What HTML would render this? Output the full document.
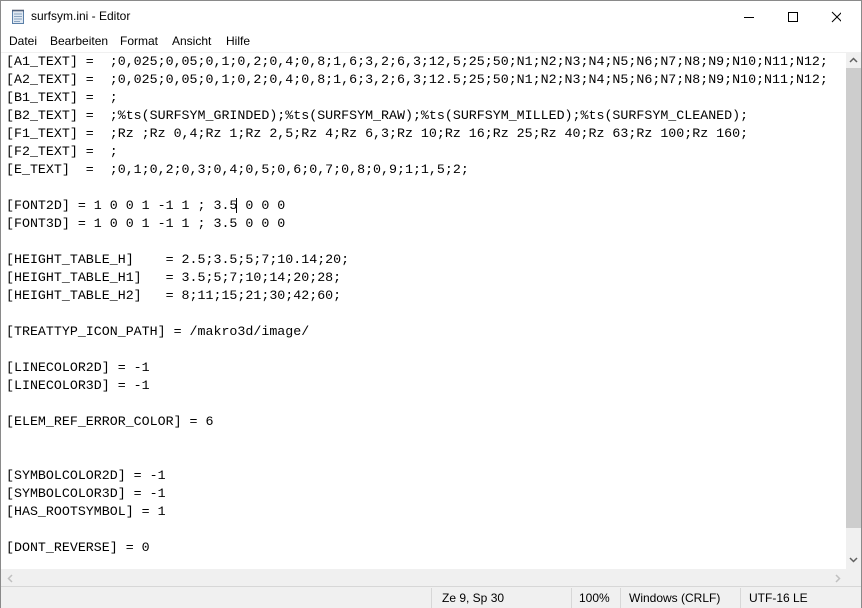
<!DOCTYPE html>
<html><head><meta charset="utf-8"><style>
*{margin:0;padding:0;box-sizing:border-box}
body{width:862px;height:608px;background:#fff;position:relative;overflow:hidden;font-family:"Liberation Sans",sans-serif}
.win{position:absolute;left:0;top:0;width:862px;height:608px;border:1px solid #8a8a8a}
.title{position:absolute;left:0;top:0;width:860px;height:31px;background:#fff}
.title .t{position:absolute;left:30px;top:8px;font-size:12px;color:#000}
.menu{position:absolute;left:0;top:31px;width:860px;height:19px;font-size:12px}
.menu span{position:absolute;top:2px}
.ed{position:absolute;left:0;top:51px;width:845px;height:517px;border-top:1px solid #f0f0f0;overflow:hidden}
pre{position:absolute;left:5px;top:0px;font-family:"Liberation Mono",monospace;font-size:13.3px;line-height:18px;color:#000;white-space:pre}
.vs{position:absolute;left:845px;top:51px;width:15px;height:517px;background:#f0f0f0}
.thumb{position:absolute;left:0;top:16px;width:15px;height:460px;background:#cdcdcd}
.hs{position:absolute;left:0;top:568px;width:860px;height:17px;background:#f0f0f0}
.st{position:absolute;left:0;top:585px;width:860px;height:22px;background:#f0f0f0;border-top:1px solid #d7d7d7;font-size:12px}
.st span{position:absolute;top:4px}
.sep{position:absolute;top:1px;width:1px;height:20px;background:#d7d7d7}
</style></head><body>
<div class="win">
<div class="title">
<svg style="position:absolute;left:9px;top:7px" width="16" height="17" viewBox="0 0 16 17"><rect x="2.5" y="2.5" width="11" height="13" fill="#dfe8f2" stroke="#5a7fa8"/><path d="M4 6h8M4 8.5h8M4 11h8M4 13.5h6" stroke="#8aa4c0"/><path d="M3 1.5v2M5 1.5v2M7 1.5v2M9 1.5v2M11 1.5v2M13 1.5v2" stroke="#445"/></svg>
<span class="t">surfsym.ini - Editor</span>
<svg style="position:absolute;left:740px;top:9px" width="100" height="14"><path d="M3 7.5h10" stroke="#000"/><rect x="47.5" y="2.5" width="9" height="9" fill="none" stroke="#000"/><path d="M91 2l10 10M101 2l-10 10" stroke="#000"/></svg>
</div>
<div class="menu"><span style="left:8px">Datei</span><span style="left:49px">Bearbeiten</span><span style="left:119px">Format</span><span style="left:171px">Ansicht</span><span style="left:225px">Hilfe</span></div>
<div class="ed"><pre>[A1_TEXT] =  ;0,025;0,05;0,1;0,2;0,4;0,8;1,6;3,2;6,3;12,5;25;50;N1;N2;N3;N4;N5;N6;N7;N8;N9;N10;N11;N12;
[A2_TEXT] =  ;0,025;0,05;0,1;0,2;0,4;0,8;1,6;3,2;6,3;12.5;25;50;N1;N2;N3;N4;N5;N6;N7;N8;N9;N10;N11;N12;
[B1_TEXT] =  ;
[B2_TEXT] =  ;%ts(SURFSYM_GRINDED);%ts(SURFSYM_RAW);%ts(SURFSYM_MILLED);%ts(SURFSYM_CLEANED);
[F1_TEXT] =  ;Rz ;Rz 0,4;Rz 1;Rz 2,5;Rz 4;Rz 6,3;Rz 10;Rz 16;Rz 25;Rz 40;Rz 63;Rz 100;Rz 160;
[F2_TEXT] =  ;
[E_TEXT]  =  ;0,1;0,2;0,3;0,4;0,5;0,6;0,7;0,8;0,9;1;1,5;2;

[FONT2D] = 1 0 0 1 -1 1 ; 3.5<span style="border-left:1px solid #000;margin-left:-1px"></span> 0 0 0
[FONT3D] = 1 0 0 1 -1 1 ; 3.5 0 0 0

[HEIGHT_TABLE_H]    = 2.5;3.5;5;7;10.14;20;
[HEIGHT_TABLE_H1]   = 3.5;5;7;10;14;20;28;
[HEIGHT_TABLE_H2]   = 8;11;15;21;30;42;60;

[TREATTYP_ICON_PATH] = /makro3d/image/

[LINECOLOR2D] = -1
[LINECOLOR3D] = -1

[ELEM_REF_ERROR_COLOR] = 6


[SYMBOLCOLOR2D] = -1
[SYMBOLCOLOR3D] = -1
[HAS_ROOTSYMBOL] = 1

[DONT_REVERSE] = 0</pre></div>
<div class="vs"><svg style="position:absolute;left:3px;top:5px" width="9" height="6"><path d="M1 5l3.5-3.5L8 5" stroke="#606060" stroke-width="1.5" fill="none"/></svg><div class="thumb"></div><svg style="position:absolute;left:3px;top:505px" width="9" height="6"><path d="M1 1l3.5 3.5L8 1" stroke="#606060" stroke-width="1.5" fill="none"/></svg></div>
<div class="hs"><svg style="position:absolute;left:6px;top:5px" width="6" height="9"><path d="M5 1L1.5 4.5 5 8" stroke="#c0c0c0" stroke-width="1.5" fill="none"/></svg><svg style="position:absolute;left:834px;top:5px" width="6" height="9"><path d="M1 1l3.5 3.5L1 8" stroke="#c0c0c0" stroke-width="1.5" fill="none"/></svg></div>
<div class="st">
<div class="sep" style="left:430px"></div><span style="left:441px">Ze 9, Sp 30</span>
<div class="sep" style="left:570px"></div><span style="left:578px">100%</span>
<div class="sep" style="left:619px"></div><span style="left:628px">Windows (CRLF)</span>
<div class="sep" style="left:739px"></div><span style="left:748px">UTF-16 LE</span>
</div>
</div>
</body></html>
